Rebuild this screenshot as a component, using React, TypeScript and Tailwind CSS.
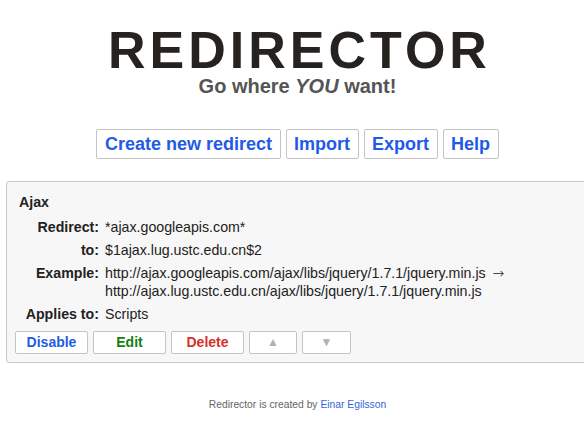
import React from 'react';

const rows: { label: string; value: React.ReactNode }[] = [
  { label: 'Redirect:', value: '*ajax.googleapis.com*' },
  { label: 'to:', value: '$1ajax.lug.ustc.edu.cn$2' },
  {
    label: 'Example:',
    value: (
      <>
        http://ajax.googleapis.com/ajax/libs/jquery/1.7.1/jquery.min.js{' '}
        <span className="ml-[3px] text-[14px] leading-[14px] font-light" style={{ fontFamily: '"DejaVu Sans", sans-serif' }}>
          →
        </span>
        <br />
        http://ajax.lug.ustc.edu.cn/ajax/libs/jquery/1.7.1/jquery.min.js
      </>
    ),
  },
  { label: 'Applies to:', value: 'Scripts' },
];

const TopButton: React.FC<{ children: React.ReactNode }> = ({ children }) => (
  <button className="bg-white border border-[#c4c4c4] rounded-[2px] px-[7.5px] py-[4px] text-[18px] leading-[20px] font-bold text-[#1f5be6]">
    {children}
  </button>
);

const SmallButton: React.FC<{ children: React.ReactNode; className: string }> = ({ children, className }) => (
  <button
    className={`bg-white border border-[#c4c4c4] rounded-[2px] py-[2px] h-[23px] text-[14px] leading-[17px] font-bold text-center ${className}`}
  >
    {children}
  </button>
);

export default function App() {
  return (
    <div className="w-[584px] h-[425px] overflow-hidden bg-white" style={{ fontFamily: '"Liberation Sans", Arial, sans-serif' }}>
      <div className="w-[595px]">
        <h1 className="mt-[24px] text-center text-[52px] leading-[52px] font-bold tracking-[4px] pl-[4px] text-[#252220]">
          REDIRECTOR
        </h1>
        <div className="text-center text-[20px] leading-[20px] font-bold text-[#555555]">
          Go where <i>YOU</i> want!
        </div>

        <div className="mt-[33px] flex justify-center gap-[5px]">
          <TopButton>Create new redirect</TopButton>
          <TopButton>Import</TopButton>
          <TopButton>Export</TopButton>
          <TopButton>Help</TopButton>
        </div>

        <div className="mt-[22px] mx-[6px] border border-[#c8c8c8] rounded-[3px] bg-[#f7f7f7] px-[8px] pt-[11px] pb-[8px] text-[14.2px] leading-[18px] text-[#222222]">
          <div className="px-[4px] font-bold mb-[4.5px]">Ajax</div>
          <div className="px-[4px]">
            {rows.map((r) => (
              <div key={r.label} className="flex py-[2.5px]">
                <div className="w-[80px] shrink-0 text-right font-bold">{r.label}</div>
                <div className="pl-[6px]">{r.value}</div>
              </div>
            ))}
          </div>
          <div className="mt-[5px] flex gap-[5px]">
            <SmallButton className="w-[73px] text-[#1f5be6]">Disable</SmallButton>
            <SmallButton className="w-[73px] text-[#13800f]">Edit</SmallButton>
            <SmallButton className="w-[73px] text-[#d6302a]">Delete</SmallButton>
            <SmallButton className="w-[48px] text-[#b0b0b0] !text-[12px]">▲</SmallButton>
            <SmallButton className="w-[49px] text-[#b0b0b0] !text-[12px]">▼</SmallButton>
          </div>
        </div>

        <div className="mt-[36px] text-center text-[10.3px] leading-[12px] text-[#666666]">
          Redirector is created by <a className="text-[#3366dd]">Einar Egilsson</a>
        </div>
      </div>
    </div>
  );
}
